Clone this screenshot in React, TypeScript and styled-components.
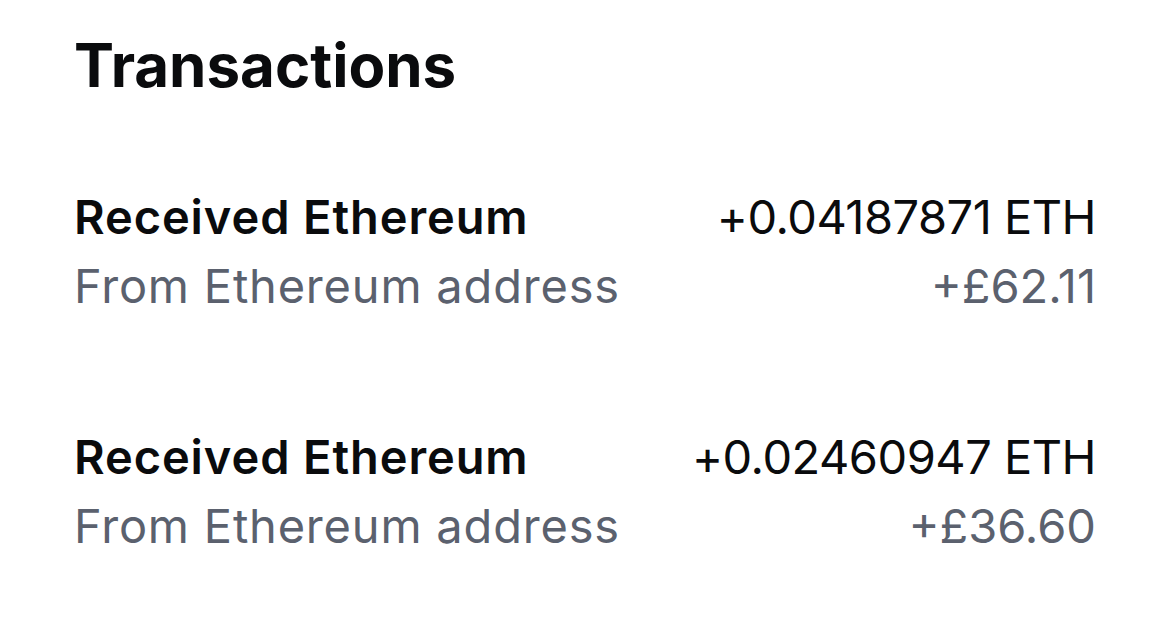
import React from 'react'
import styled, { createGlobalStyle } from 'styled-components'

const GlobalStyle = createGlobalStyle`
  body {
    margin: 0;
    background: #ffffff;
    font-family: Inter, "Noto Sans", sans-serif;
  }
`

const transactions = [
  { title: 'Received Ethereum', from: 'From Ethereum address', amount: '+0.04187871 ETH', fiat: '+£62.11' },
  { title: 'Received Ethereum', from: 'From Ethereum address', amount: '+0.02460947 ETH', fiat: '+£36.60' },
]

const App = () => {
  return (
    <>
      <GlobalStyle />
      <Wrapper>
        <Title>Transactions</Title>
        <List>
          {transactions.map((tx, i) => (
            <Row key={i}>
              <Column>
                <Primary>{tx.title}</Primary>
                <Secondary $spaced>{tx.from}</Secondary>
              </Column>
              <Column $right>
                <Amount>{tx.amount}</Amount>
                <Secondary>{tx.fiat}</Secondary>
              </Column>
            </Row>
          ))}
        </List>
      </Wrapper>
    </>
  )
}

const Wrapper = styled.div`
  width: 1170px;
  height: 626px;
  box-sizing: border-box;
  padding: 27px 74px 0 74px;
  display: flex;
  flex-direction: column;
`

const Title = styled.h1`
  margin: 0;
  font-size: 60px;
  line-height: 76px;
  font-weight: 700;
  color: #0a0b0d;
`

const List = styled.div`
  display: flex;
  flex-direction: column;
  gap: 102px;
  margin-top: 79px;
`

const Row = styled.div`
  display: flex;
  justify-content: space-between;
  align-items: flex-start;
`

const Column = styled.div<{ $right?: boolean }>`
  display: flex;
  flex-direction: column;
  align-items: ${(p) => (p.$right ? 'flex-end' : 'flex-start')};
`

const Primary = styled.span`
  font-size: 47px;
  line-height: 69px;
  font-weight: 600;
  letter-spacing: 0.9px;
  color: #0a0b0d;
`

const Amount = styled.span`
  font-size: 47px;
  line-height: 69px;
  font-weight: 400;
  letter-spacing: -0.5px;
  color: #0a0b0d;
`

const Secondary = styled.span<{ $spaced?: boolean }>`
  font-size: 47px;
  line-height: 69px;
  font-weight: 400;
  letter-spacing: ${(p) => (p.$spaced ? '0.8px' : '0')};
  color: #5b616e;
`

export default App
